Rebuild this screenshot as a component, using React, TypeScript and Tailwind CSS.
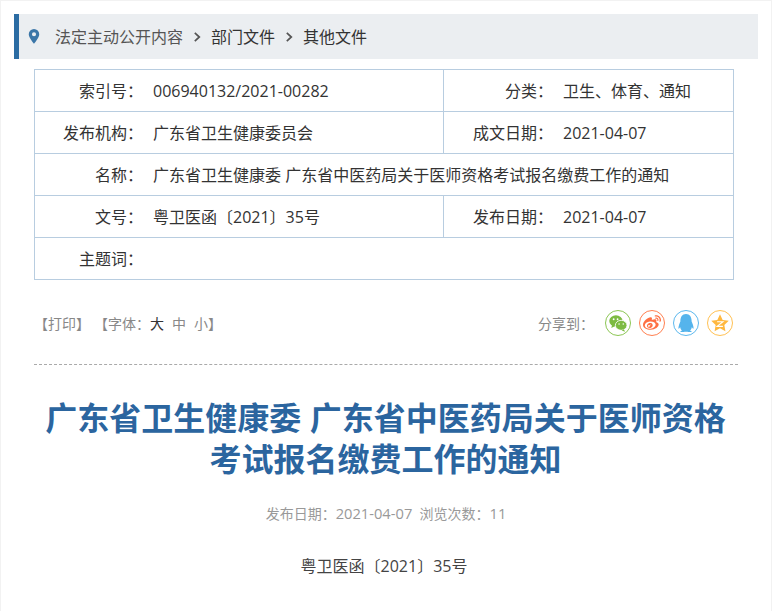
import { FaQq, FaWeibo } from "react-icons/fa";

const font = "font-['Open_Sans','Noto_Sans_CJK_SC',sans-serif]";

function Circle({ c, children }: { c: string; children: React.ReactNode }) {
  return <span className={`flex h-[26px] w-[26px] items-center justify-center rounded-full border ${c}`}>{children}</span>;
}

function Row({ children }: { children: React.ReactNode }) {
  return <div className="flex h-[42px] border-b border-[#b8cde0] last:border-b-0 last:h-[41px]">{children}</div>;
}

function Left({ label, value, wide }: { label: string; value: string; wide?: boolean }) {
  return (
    <div className={`flex items-center ${wide ? "flex-1" : "w-[409px] border-r border-[#b8cde0]"}`}>
      <span className="w-[108px] text-right">{label}</span>
      <span className="pl-[10px]">{value}</span>
    </div>
  );
}

function Right({ label, value }: { label: string; value: string }) {
  return (
    <div className="flex flex-1 items-center">
      <span className="w-[109px] text-right">{label}</span>
      <span className="pl-[10px]">{value}</span>
    </div>
  );
}

function Chevron() {
  return (
    <svg viewBox="0 0 10 12" className="ml-[10px] h-[12px] w-[9px]" fill="none" stroke="#555" strokeWidth="1.9">
      <path d="M2 1.5 7 6l-5 4.5" />
    </svg>
  );
}

export default function App() {
  return (
    <div className={`${font} h-[611px] overflow-hidden bg-[#f2f2f2] pl-px pr-px pt-px text-[#333]`}>
      <div className="h-[610px] bg-white pt-[13px]">
        <div className="ml-[13px] flex h-[45px] w-[744px] items-center border-l-[5px] border-[#2b6ca3] bg-[#ebeef1] text-[16px] text-[#555]">
          <svg viewBox="0 0 12 16" className="ml-[9px] h-[15px] w-[12px]" fill="#3b76a8">
            <path fillRule="evenodd" d="M6 0a5.6 5.6 0 0 0-5.6 5.6C.4 9.6 6 15.6 6 15.6s5.6-6 5.6-10A5.6 5.6 0 0 0 6 0Zm0 7.8a2.2 2.2 0 1 1 0-4.4 2.2 2.2 0 0 1 0 4.4Z" />
          </svg>
          <span className="ml-[15px]">法定主动公开内容</span>
          <Chevron />
          <span className="ml-[9px] text-[#333]">部门文件</span>
          <Chevron />
          <span className="ml-[9px] text-[#333]">其他文件</span>
        </div>

        <div className="ml-[33px] mt-[10px] w-[700px] border border-[#b8cde0] text-[16px]">
          <Row><Left label="索引号：" value="006940132/2021-00282" /><Right label="分类：" value="卫生、体育、通知" /></Row>
          <Row><Left label="发布机构：" value="广东省卫生健康委员会" /><Right label="成文日期：" value="2021-04-07" /></Row>
          <Row><Left wide label="名称：" value="广东省卫生健康委 广东省中医药局关于医师资格考试报名缴费工作的通知" /></Row>
          <Row><Left label="文号：" value="粤卫医函〔2021〕35号" /><Right label="发布日期：" value="2021-04-07" /></Row>
          <Row><Left wide label="主题词：" value="" /></Row>
        </div>

        <div className="ml-[33px] mt-[29px] flex h-[28px] w-[704px] items-center text-[14px] text-[#888]">
          <span>【打印】</span>
          <span className="ml-[4px]">【字体：</span>
          <span className="text-[#333]">大</span>
          <span className="ml-[8px]">中</span>
          <span className="ml-[8px]">小</span>
          <span>】</span>
          <span className="ml-auto">分享到：</span>
          <span className="ml-[11px] mr-[5px] flex gap-[8px]">
            <Circle c="border-[#8cc654] text-[#7dbb42]">
              <svg viewBox="0 0 24 24" className="h-[20px] w-[20px]">
                <ellipse cx="9.5" cy="9.5" rx="8" ry="6.8" fill="currentColor" />
                <path d="M5 14l-1 4 4-2z" fill="currentColor" />
                <ellipse cx="15.8" cy="14.8" rx="7" ry="6" fill="currentColor" stroke="#fff" strokeWidth="1" />
                <path d="M19 19.5l1.5 3-4-1.5z" fill="currentColor" />
                <circle cx="6.8" cy="7.5" r="1.1" fill="#fff" />
                <circle cx="11.5" cy="7.5" r="1.1" fill="#fff" />
                <circle cx="13.3" cy="13.2" r="0.9" fill="#fff" />
                <circle cx="18.3" cy="13.2" r="0.9" fill="#fff" />
              </svg>
            </Circle>
            <Circle c="border-[#ff7f50] text-[#ff7043]"><FaWeibo size={18} /></Circle>
            <Circle c="border-[#5cb8ee] text-[#55b4ec]"><FaQq size={18} /></Circle>
            <Circle c="border-[#ffc153] text-[#ffb83f]">
              <svg viewBox="0 0 24 24" className="h-[20px] w-[20px]">
                <path fill="currentColor" d="M12 1.5l3.2 6.8 7.3 1-5.3 5.1 1.3 7.4L12 18.3l-6.5 3.5 1.3-7.4L1.5 9.3l7.3-1z" />
                <path d="M8.5 10.5h7l-7 5.5h7" fill="none" stroke="#fff" strokeWidth="1.3" />
              </svg>
            </Circle>
          </span>
        </div>

        <div className="ml-[33px] mt-[27px] w-[704px] border-t border-dashed border-[#aaa]" />

        <h1 className="mx-auto mt-[32px] w-[700px] pr-px text-center text-[32px] font-bold leading-[41px] text-[#2b659f]">
          广东省卫生健康委 广东省中医药局关于医师资格考试报名缴费工作的通知
        </h1>

        <div className="mt-[23px] text-center text-[14px] text-[#999]">
          发布日期：<span className="text-[14.7px]">2021-04-07</span>&nbsp;&nbsp;浏览次数：<span className="text-[14.7px]">11</span>
        </div>
        <div className="mt-[30px] pr-[4px] text-center text-[16px] text-[#444]">粤卫医函〔2021〕35号</div>
      </div>
    </div>
  );
}
